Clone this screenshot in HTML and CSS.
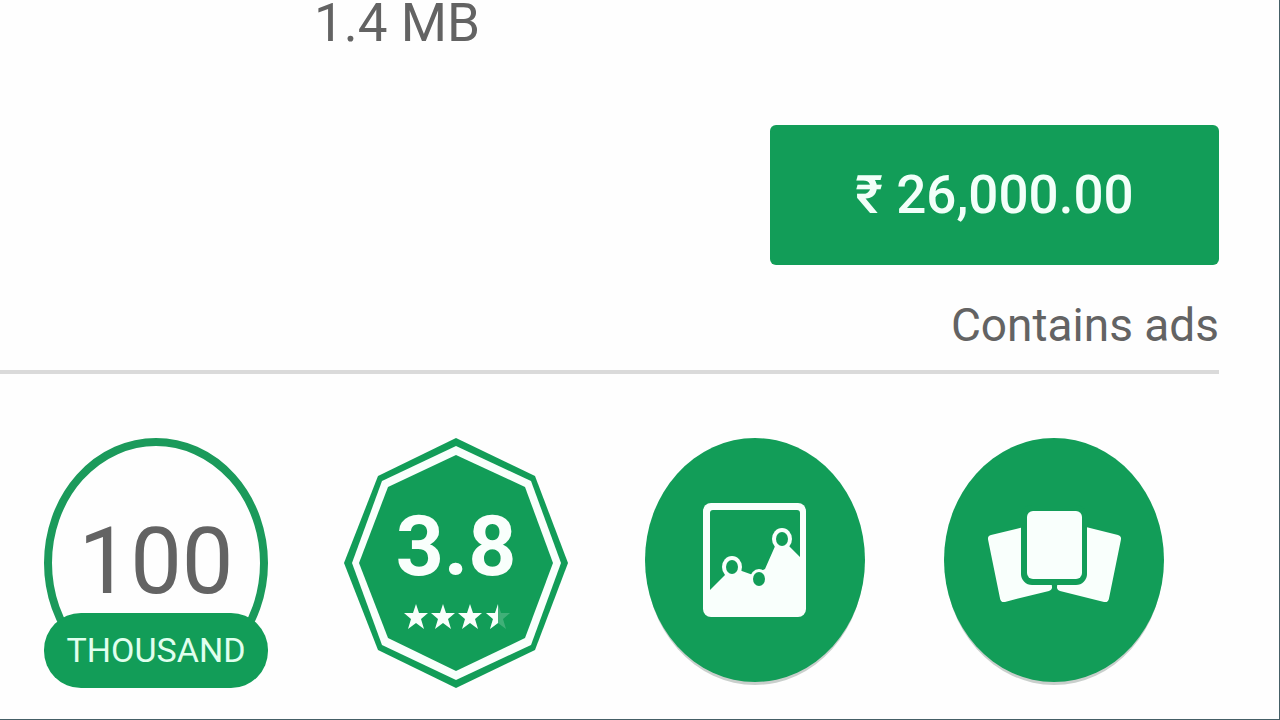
FILE: index.html
```html
<!DOCTYPE html>
<html lang="en">
<head>
    <meta charset="UTF-8">
    <meta name="viewport" content="width=device-width, initial-scale=1.0">
    <title>App Details</title>
    <link rel="stylesheet" href="styles.css">
</head>
<body>
    <main class="page">
        <section class="summary">
            <p class="size">1.4 MB</p>
            <button type="button" class="buy">₹ 26,000.00</button>
            <p class="ads">Contains ads</p>
        </section>
        <section class="badges">
            <div class="badge downloads">
                <svg viewBox="0 0 224 250" aria-hidden="true">
                    <ellipse class="ring" cx="112" cy="125" rx="108" ry="121"/>
                </svg>
                <span class="count">100</span>
                <span class="unit">THOUSAND</span>
            </div>
            <div class="badge rating">
                <svg viewBox="0 0 224 250" aria-hidden="true">
                    <defs>
                        <path id="star" d="M0 -13 L3 -4 H12 L5 2 L8 12 L0 6 L-8 12 L-5 2 L-12 -4 H-3 Z"/>
                    </defs>
                    <polygon class="green" points="112,0 191,38 224,125 191,212 112,250 34,212 0,125 34,38"/>
                    <polygon class="white" points="112,8 187,43 217,125 187,207 112,242 38,207 8,125 38,43"/>
                    <polygon class="green" points="112,17 181,49 209,125 181,200 112,233 44,200 15,125 44,49"/>
                    <g class="white">
                        <use href="#star" x="72" y="179"/>
                        <use href="#star" x="99" y="179"/>
                        <use href="#star" x="126" y="179"/>
                        <use href="#star" x="154" y="179" opacity="0.2"/>
                        <path d="M154 166 V185 L146 191 L149 181 L142 175 H151 Z"/>
                    </g>
                </svg>
                <span class="score">3.8</span>
            </div>
            <a href="#" class="badge" aria-label="Productivity">
                <svg viewBox="0 0 224 250" aria-hidden="true">
                    <ellipse class="shadow" cx="111" cy="125" rx="109" ry="122"/>
                    <ellipse class="green" cx="111" cy="122" rx="110" ry="122"/>
                    <rect class="white" x="59" y="65" width="103" height="114" rx="8"/>
                    <path class="green" d="M69 72 H153 Q156 72 156 75 V119 L143 106 H132 L121 131 L109 137 L95 132 L84 134 L66 152 V75 Q66 72 69 72 Z"/>
                    <g class="white">
                        <ellipse cx="88" cy="129" rx="10" ry="11"/>
                        <ellipse cx="115" cy="141" rx="9" ry="10"/>
                        <ellipse cx="138" cy="101" rx="10" ry="11"/>
                    </g>
                    <g class="green">
                        <ellipse cx="88" cy="129" rx="6" ry="7"/>
                        <ellipse cx="115" cy="141" rx="6" ry="7"/>
                        <ellipse cx="138" cy="101" rx="6" ry="7"/>
                    </g>
                </svg>
            </a>
            <a href="#" class="badge" aria-label="Similar apps">
                <svg viewBox="0 0 224 250" aria-hidden="true">
                    <ellipse class="shadow" cx="110" cy="125" rx="109" ry="122"/>
                    <ellipse class="green" cx="110" cy="122" rx="110" ry="122"/>
                    <g class="card">
                        <polygon points="48,101 96,89 104,149 60,160"/>
                        <polygon points="173,101 125,89 117,149 161,160"/>
                    </g>
                    <rect class="green" x="77" y="67" width="66" height="80" rx="11"/>
                    <rect class="white" x="83" y="73" width="55" height="68" rx="6"/>
                </svg>
            </a>
        </section>
    </main>
</body>
</html>
```

FILE: styles.css
```css
* {
    box-sizing: border-box;
}
body {
    margin: 0;
    font-family: Roboto, "Liberation Sans", sans-serif;
    color: #636363;
    background: #fefefe;
}
p {
    margin: 0;
}
.page {
    min-height: 100vh;
    border-right: 1px solid #455f66;
    border-bottom: 1px solid #455f66;
}
.summary {
    display: flex;
    flex-direction: column;
    align-items: flex-end;
    margin-right: 60px;
    padding-bottom: 17px;
    border-bottom: 4px solid #dadada;
}
.size {
    align-self: flex-start;
    margin: 0 0 79px 314px;
    font-size: 53px;
    line-height: 46px;
}
.buy {
    width: 449px;
    height: 140px;
    border: none;
    border-radius: 6px;
    background: #129d58;
    color: #f2fff9;
    font-family: inherit;
    font-size: 53px;
    font-weight: 500;
    cursor: pointer;
}
.ads {
    margin-top: 32px;
    font-size: 46px;
    line-height: 56px;
}
.badges {
    display: grid;
    grid-template-columns: repeat(4, 1fr);
    justify-items: center;
    padding: 64px 73px 24px 6px;
}
.badge {
    position: relative;
    width: 224px;
    text-align: center;
}
.badge svg {
    display: block;
    width: 100%;
}
.green {
    fill: #129d58;
}
.white {
    fill: #f9fffc;
}
.shadow {
    fill: #c9cfcc;
}
.ring {
    fill: none;
    stroke: #1b9a5b;
    stroke-width: 8;
}
.card {
    fill: #f9fffc;
    stroke: #f9fffc;
    stroke-width: 8;
    stroke-linejoin: round;
}
/* labels that lie over the badge shapes */
.count, .unit, .score {
    position: absolute;
    left: 0;
    right: 0;
}
.count {
    top: 74px;
    font-size: 92px;
    line-height: 100px;
}
.unit {
    bottom: 0;
    border-radius: 37px;
    background: #129d58;
    color: #e0ffee;
    font-size: 34px;
    line-height: 75px;
}
.score {
    top: 59px;
    color: #f9fffc;
    font-size: 84px;
    font-weight: 700;
    line-height: 100px;
}
```
